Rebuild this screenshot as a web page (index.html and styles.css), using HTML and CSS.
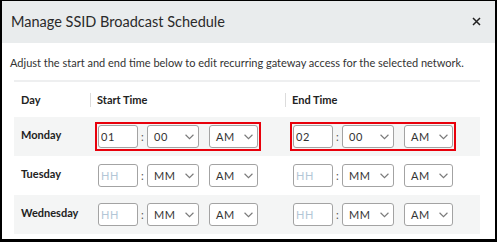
FILE: index.html
```html
<!DOCTYPE html>
<html lang="en"><head>
    <meta charset="UTF-8">
    <meta name="viewport" content="width=device-width, initial-scale=1.0">
    <title>Manage SSID Broadcast Schedule</title>
    <link rel="stylesheet" href="styles.css">
</head>
<body>

    <div class="modal">
        <div class="modal-head">
            <h1>Manage SSID Broadcast Schedule</h1>
            <button class="close" aria-label="Close">
                <svg width="9" height="9" viewBox="0 0 9 9"><path d="M1 1L8 8M8 1L1 8" stroke="#222" stroke-width="1.5"/></svg>
            </button>
        </div>

        <div class="modal-body">
            <p class="intro">Adjust the start and end time below to edit recurring gateway access for the selected network.</p>

            <table class="schedule">
                <thead>
                    <tr>
                        <th class="col-day">Day</th>
                        <th class="col-start"><span class="sep">Start Time</span></th>
                        <th class="col-end"><span class="sep">End Time</span></th>
                    </tr>
                </thead>
                <tbody>
                    <tr class="shade">
                        <td class="day">Monday</td>
                        <td>
                            <div class="time-group error">
                                <input class="hh" type="text" value="01">
                                <span class="colon">:</span>
                                <div class="pick mm">00<svg viewBox="0 0 8 5"><path d="M0.5 0.5L4 4L7.5 0.5"/></svg></div>
                                <div class="pick ampm">AM<svg viewBox="0 0 8 5"><path d="M0.5 0.5L4 4L7.5 0.5"/></svg></div>
                            </div>
                        </td>
                        <td>
                            <div class="time-group error">
                                <input class="hh" type="text" value="02">
                                <span class="colon">:</span>
                                <div class="pick mm">00<svg viewBox="0 0 8 5"><path d="M0.5 0.5L4 4L7.5 0.5"/></svg></div>
                                <div class="pick ampm">AM<svg viewBox="0 0 8 5"><path d="M0.5 0.5L4 4L7.5 0.5"/></svg></div>
                            </div>
                        </td>
                    </tr>
                    <tr>
                        <td class="day">Tuesday</td>
                        <td>
                            <div class="time-group">
                                <input class="hh" type="text" placeholder="HH">
                                <span class="colon">:</span>
                                <div class="pick mm">MM<svg viewBox="0 0 8 5"><path d="M0.5 0.5L4 4L7.5 0.5"/></svg></div>
                                <div class="pick ampm">AM<svg viewBox="0 0 8 5"><path d="M0.5 0.5L4 4L7.5 0.5"/></svg></div>
                            </div>
                        </td>
                        <td>
                            <div class="time-group">
                                <input class="hh" type="text" placeholder="HH">
                                <span class="colon">:</span>
                                <div class="pick mm">MM<svg viewBox="0 0 8 5"><path d="M0.5 0.5L4 4L7.5 0.5"/></svg></div>
                                <div class="pick ampm">AM<svg viewBox="0 0 8 5"><path d="M0.5 0.5L4 4L7.5 0.5"/></svg></div>
                            </div>
                        </td>
                    </tr>
                    <tr class="shade">
                        <td class="day">Wednesday</td>
                        <td>
                            <div class="time-group">
                                <input class="hh" type="text" placeholder="HH">
                                <span class="colon">:</span>
                                <div class="pick mm">MM<svg viewBox="0 0 8 5"><path d="M0.5 0.5L4 4L7.5 0.5"/></svg></div>
                                <div class="pick ampm">AM<svg viewBox="0 0 8 5"><path d="M0.5 0.5L4 4L7.5 0.5"/></svg></div>
                            </div>
                        </td>
                        <td>
                            <div class="time-group">
                                <input class="hh" type="text" placeholder="HH">
                                <span class="colon">:</span>
                                <div class="pick mm">MM<svg viewBox="0 0 8 5"><path d="M0.5 0.5L4 4L7.5 0.5"/></svg></div>
                                <div class="pick ampm">AM<svg viewBox="0 0 8 5"><path d="M0.5 0.5L4 4L7.5 0.5"/></svg></div>
                            </div>
                        </td>
                    </tr>
                </tbody>
            </table>
        </div>
    </div>

</body></html>
```

FILE: styles.css
```css
/* schedule modal */
* {
    box-sizing: border-box;
}

body {
    margin: 0;
    font-family: Lato, "Open Sans", sans-serif;
    color: #222;
}

.modal {
    width: 497px;
    height: 242px;
    border: 2px solid #000;
    border-top-width: 1px;
    border-bottom-width: 3px;
    background-color: #fff;
    overflow: hidden;
}

.modal-head {
    height: 42px;
    background-color: #e9eced;
    display: flex;
    align-items: center;
    justify-content: space-between;
    padding: 0 14px 2px 9px;
}

.modal-head h1 {
    margin: 0;
    font-size: 14.5px;
    font-weight: 400;
    color: #2a2a2a;
}

.close {
    border: 0;
    background: none;
    padding: 0;
    width: 9px;
    height: 9px;
    display: flex;
    cursor: pointer;
}

.modal-body {
    padding: 0 15px 0 12px;
}

.intro {
    margin: 0;
    padding: 13px 0 11px;
    margin-left: -4px;
    font-size: 11px;
    color: #333;
    white-space: nowrap;
}

.schedule {
    width: 466px;
    border-collapse: collapse;
    border-top: 2px solid #eeeff0;
    font-size: 11px;
}

.schedule th {
    height: 36px;
    text-align: left;
    font-weight: 700;
    color: #222;
    padding: 0;
}

.col-day {
    width: 76px;
    padding-left: 7px !important;
}

.col-start {
    width: 195px;
}

.sep {
    display: block;
    border-left: 1px solid #dcdcdc;
    padding-left: 6px;
    line-height: 14px;
}

.schedule td {
    height: 39px;
    padding: 0 0 0 5px;
}

.schedule td.day {
    padding-left: 7px;
    font-weight: 700;
    padding-bottom: 4px;
}

.shade td {
    background-color: #f4f5f5;
}

.time-group {
    display: inline-flex;
    align-items: center;
    border: 2px solid transparent;
    padding: 1px;
}

.time-group.error {
    border-color: #e8000b;
}

.hh,
.pick {
    height: 23px;
    border: 1px solid #a3a3a3;
    border-radius: 3px;
    background-color: #fff;
    font-family: inherit;
    font-size: 11px;
    letter-spacing: 0.5px;
    color: #333;
}

.hh {
    width: 40px;
    padding: 0 2px;
    outline: none;
}

.hh::placeholder {
    color: #b3c6d6;
}

.colon {
    width: 9px;
    text-align: center;
    color: #555;
}

.pick {
    display: flex;
    align-items: center;
    justify-content: space-between;
    padding: 0 4px 0 6px;
}

.pick svg {
    width: 9px;
    height: 6px;
    fill: none;
    stroke: #7a7a7a;
    stroke-width: 1;
}

.mm {
    width: 52px;
    margin-right: 10px;
}

.ampm {
    width: 49px;
}
```
